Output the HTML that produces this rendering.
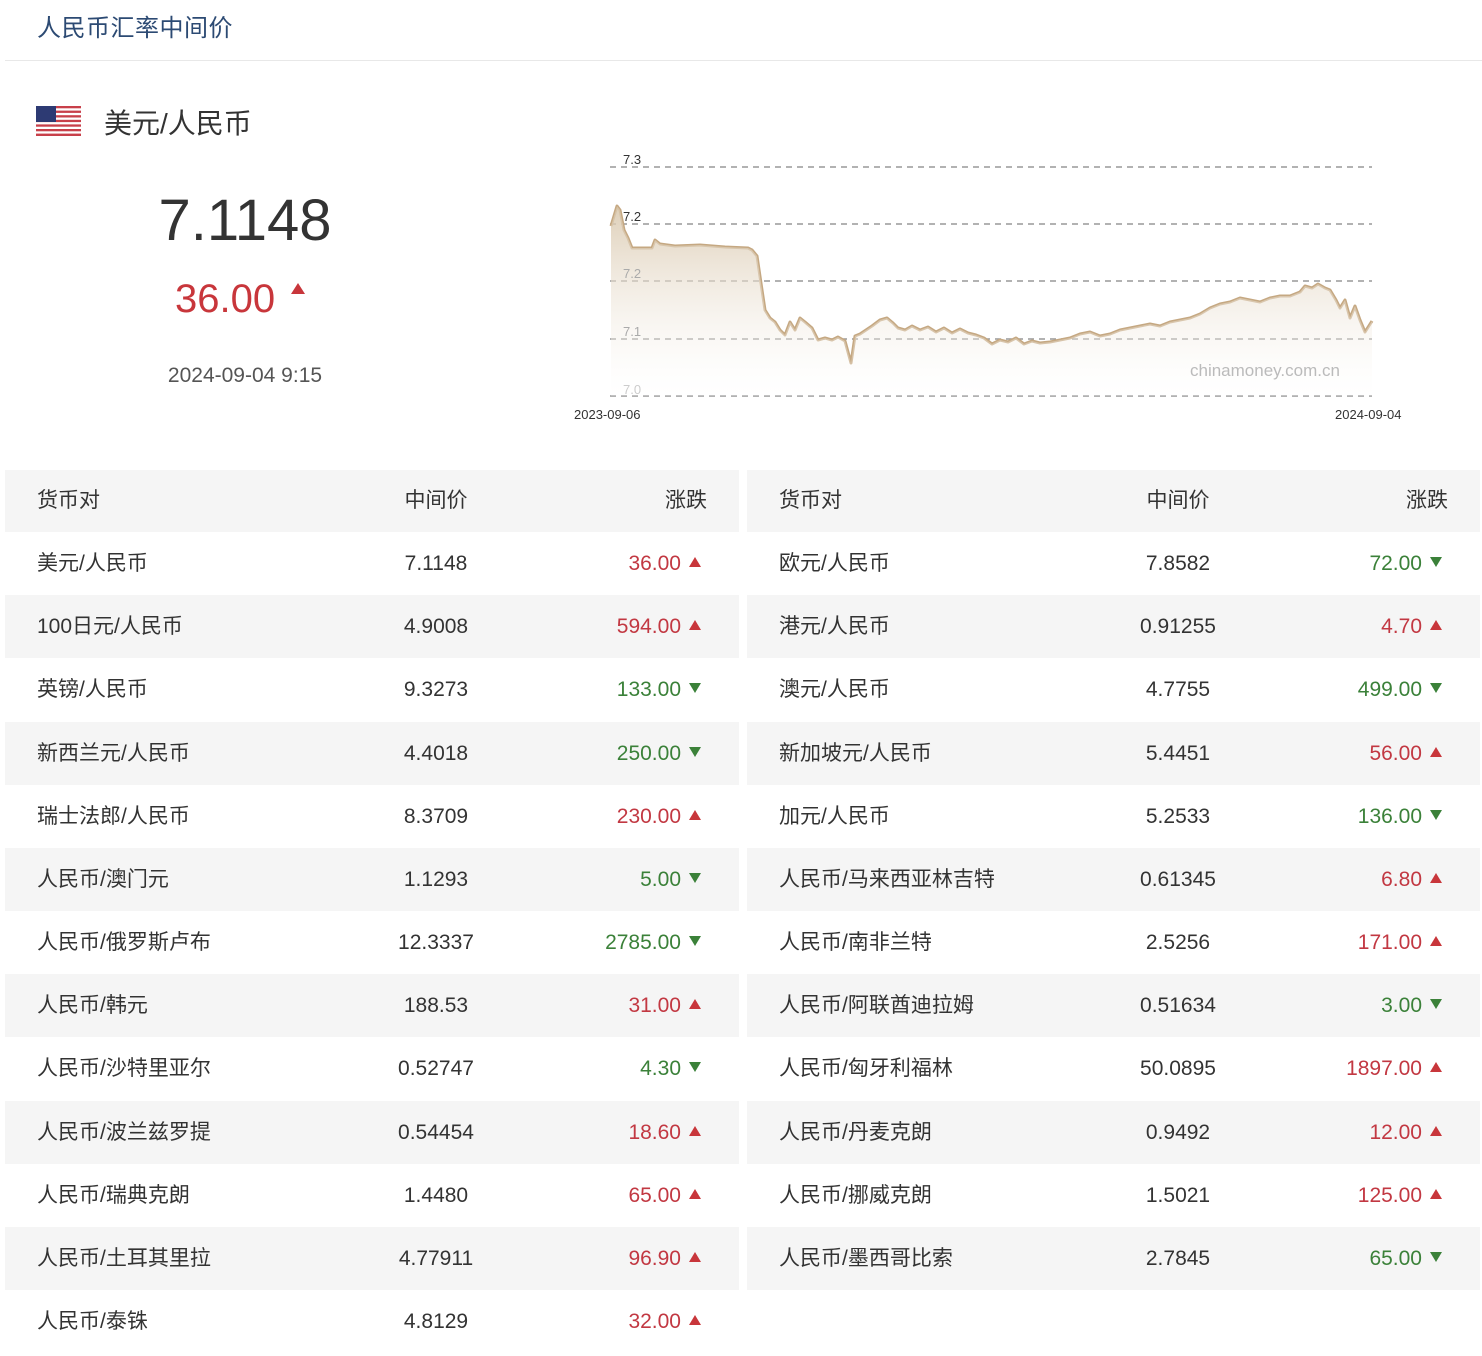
<!DOCTYPE html>
<html><head><meta charset="utf-8">
<style>
*{margin:0;padding:0;box-sizing:border-box}
body{width:1482px;height:1356px;background:#fff;position:relative;overflow:hidden;font-family:"Liberation Sans","Noto Sans CJK SC",sans-serif;color:#333}
.a{position:absolute}
.t{position:absolute;height:63px;line-height:63px;font-size:21px;color:#333}
.g{background:#f5f5f5}
.L{left:5px;width:734px}.R{left:747px;width:733px}
.t span{position:absolute;top:0}
.n{left:32px}
.m{width:200px;text-align:center;left:331px}
.c{right:38px;text-align:right}
.up{color:#c23842}.dn{color:#3b8139}
.t span.tri{position:relative;display:inline-block;font-size:0;width:0;height:0;margin-left:8px;vertical-align:middle;top:-2px}
.up .tri{border-left:6px solid transparent;border-right:6px solid transparent;border-bottom:10px solid #c8363b}
.dn .tri{border-left:6px solid transparent;border-right:6px solid transparent;border-top:10px solid #3b8139}
</style></head><body>
<div class="a" style="left:37px;top:8px;font-size:24px;color:#2c4a73;letter-spacing:0.5px">人民币汇率中间价</div>
<div class="a" style="left:5px;top:60px;width:1477px;height:1px;background:#e8e8e8"></div>
<svg class="a" style="left:36px;top:106px" width="45" height="30" viewBox="0 0 45 30">
<rect width="45" height="30" fill="#fff"/>
<g fill="#c8404a"><rect y="0" width="45" height="2.3"/><rect y="4.6" width="45" height="2.3"/><rect y="9.2" width="45" height="2.3"/><rect y="13.8" width="45" height="2.3"/><rect y="18.4" width="45" height="2.3"/><rect y="23" width="45" height="2.3"/><rect y="27.6" width="45" height="2.4"/></g>
<rect width="20" height="16" fill="#2d3a73"/></svg>
<div class="a" style="left:104px;top:102px;font-size:28px;color:#333">美元/人民币</div>
<div class="a" style="left:0;width:490px;text-align:center;top:187px;font-size:58px;color:#333">7.1148</div>
<div class="a" style="left:175px;top:277px;font-size:40px;color:#c8363b">36.00<span style="display:inline-block;width:0;height:0;border-left:7px solid transparent;border-right:7px solid transparent;border-bottom:11px solid #c8363b;margin-left:16px;position:relative;top:-18px"></span></div>
<div class="a" style="left:0;width:490px;text-align:center;top:364px;font-size:21px;color:#555">2024-09-04 9:15</div>

<svg class="a" style="left:560px;top:140px" width="880" height="300" viewBox="560 140 880 300">
<defs><linearGradient id="gr" x1="0" y1="0" x2="0" y2="1"><stop offset="0" stop-color="#d8c6ab" stop-opacity="0.85"/><stop offset="1" stop-color="#fff" stop-opacity="0.2"/></linearGradient></defs>
<g stroke="#999" stroke-dasharray="6,5" stroke-width="1.5"><line x1="610" y1="167" x2="1372" y2="167"/><line x1="610" y1="224" x2="1372" y2="224"/><line x1="610" y1="281" x2="1372" y2="281"/><line x1="610" y1="339" x2="1372" y2="339"/><line x1="610" y1="396" x2="1372" y2="396"/></g>
<path id="ln" d="M611,226 L617,206 L620,210 L624,230 L628,238 L632,248 L652,248 L655,240 L660,244 L675,246 L700,245 L725,247 L748,248 L752,250 L757,256 L762,290 L765,310 L770,318 L775,322 L780,330 L785,335 L790,322 L795,330 L800,318 L805,322 L812,328 L818,340 L825,338 L832,340 L838,337 L845,341 L851,363 L855,336 L860,334 L866,330 L872,326 L880,320 L887,318 L893,323 L898,328 L905,330 L912,326 L920,330 L928,327 L936,332 L944,328 L952,333 L960,329 L968,333 L976,335 L984,338 L992,344 L1000,340 L1008,342 L1016,338 L1024,344 L1032,341 L1040,343 L1050,342 L1060,340 L1070,338 L1080,334 L1090,332 L1100,336 L1110,334 L1120,330 L1130,328 L1140,326 L1150,324 L1160,326 L1170,322 L1180,320 L1190,318 L1200,314 L1210,308 L1220,304 L1230,302 L1240,298 L1250,300 L1260,302 L1270,298 L1280,296 L1290,296 L1300,292 L1305,286 L1312,288 L1318,284 L1325,288 L1330,290 L1336,300 L1340,308 L1345,300 L1350,318 L1355,306 L1360,320 L1365,332 L1372,321" fill="none" stroke="#c5a882" stroke-width="3" stroke-linejoin="round"/>
<path d="M611,226 L617,206 L620,210 L624,230 L628,238 L632,248 L652,248 L655,240 L660,244 L675,246 L700,245 L725,247 L748,248 L752,250 L757,256 L762,290 L765,310 L770,318 L775,322 L780,330 L785,335 L790,322 L795,330 L800,318 L805,322 L812,328 L818,340 L825,338 L832,340 L838,337 L845,341 L851,363 L855,336 L860,334 L866,330 L872,326 L880,320 L887,318 L893,323 L898,328 L905,330 L912,326 L920,330 L928,327 L936,332 L944,328 L952,333 L960,329 L968,333 L976,335 L984,338 L992,344 L1000,340 L1008,342 L1016,338 L1024,344 L1032,341 L1040,343 L1050,342 L1060,340 L1070,338 L1080,334 L1090,332 L1100,336 L1110,334 L1120,330 L1130,328 L1140,326 L1150,324 L1160,326 L1170,322 L1180,320 L1190,318 L1200,314 L1210,308 L1220,304 L1230,302 L1240,298 L1250,300 L1260,302 L1270,298 L1280,296 L1290,296 L1300,292 L1305,286 L1312,288 L1318,284 L1325,288 L1330,290 L1336,300 L1340,308 L1345,300 L1350,318 L1355,306 L1360,320 L1365,332 L1372,321 L1372,396 L611,396 Z" fill="url(#gr)"/>
<g font-family="Liberation Sans,sans-serif" font-size="13"><text x="623" y="164" fill="#333">7.3</text><text x="623" y="221" fill="#333">7.2</text><text x="623" y="278" fill="#aaa">7.2</text><text x="623" y="336" fill="#aaa">7.1</text><text x="623" y="394" fill="#ccc">7.0</text>
<text x="574" y="419" fill="#333">2023-09-06</text><text x="1335" y="419" fill="#333">2024-09-04</text>
<text x="1190" y="376" fill="#bbb" font-size="17">chinamoney.com.cn</text></g>
</svg>

<div class="t L g" style="top:470px;height:62px;line-height:62px"><span class="n">货币对</span><span class="m">中间价</span><span class="c" style="right:32px">涨跌</span></div>
<div class="t R g" style="top:470px;height:62px;line-height:62px"><span class="n">货币对</span><span class="m">中间价</span><span class="c" style="right:32px">涨跌</span></div>

<div class="t L" style="top:532px"><span class="n">美元/人民币</span><span class="m">7.1148</span><span class="c up">36.00<span class="tri"></span></span></div>
<div class="t L g" style="top:595px"><span class="n">100日元/人民币</span><span class="m">4.9008</span><span class="c up">594.00<span class="tri"></span></span></div>
<div class="t L" style="top:658px"><span class="n">英镑/人民币</span><span class="m">9.3273</span><span class="c dn">133.00<span class="tri"></span></span></div>
<div class="t L g" style="top:722px"><span class="n">新西兰元/人民币</span><span class="m">4.4018</span><span class="c dn">250.00<span class="tri"></span></span></div>
<div class="t L" style="top:785px"><span class="n">瑞士法郎/人民币</span><span class="m">8.3709</span><span class="c up">230.00<span class="tri"></span></span></div>
<div class="t L g" style="top:848px"><span class="n">人民币/澳门元</span><span class="m">1.1293</span><span class="c dn">5.00<span class="tri"></span></span></div>
<div class="t L" style="top:911px"><span class="n">人民币/俄罗斯卢布</span><span class="m">12.3337</span><span class="c dn">2785.00<span class="tri"></span></span></div>
<div class="t L g" style="top:974px"><span class="n">人民币/韩元</span><span class="m">188.53</span><span class="c up">31.00<span class="tri"></span></span></div>
<div class="t L" style="top:1037px"><span class="n">人民币/沙特里亚尔</span><span class="m">0.52747</span><span class="c dn">4.30<span class="tri"></span></span></div>
<div class="t L g" style="top:1101px"><span class="n">人民币/波兰兹罗提</span><span class="m">0.54454</span><span class="c up">18.60<span class="tri"></span></span></div>
<div class="t L" style="top:1164px"><span class="n">人民币/瑞典克朗</span><span class="m">1.4480</span><span class="c up">65.00<span class="tri"></span></span></div>
<div class="t L g" style="top:1227px"><span class="n">人民币/土耳其里拉</span><span class="m">4.77911</span><span class="c up">96.90<span class="tri"></span></span></div>
<div class="t L" style="top:1290px"><span class="n">人民币/泰铢</span><span class="m">4.8129</span><span class="c up">32.00<span class="tri"></span></span></div>

<div class="t R" style="top:532px"><span class="n">欧元/人民币</span><span class="m">7.8582</span><span class="c dn">72.00<span class="tri"></span></span></div>
<div class="t R g" style="top:595px"><span class="n">港元/人民币</span><span class="m">0.91255</span><span class="c up">4.70<span class="tri"></span></span></div>
<div class="t R" style="top:658px"><span class="n">澳元/人民币</span><span class="m">4.7755</span><span class="c dn">499.00<span class="tri"></span></span></div>
<div class="t R g" style="top:722px"><span class="n">新加坡元/人民币</span><span class="m">5.4451</span><span class="c up">56.00<span class="tri"></span></span></div>
<div class="t R" style="top:785px"><span class="n">加元/人民币</span><span class="m">5.2533</span><span class="c dn">136.00<span class="tri"></span></span></div>
<div class="t R g" style="top:848px"><span class="n">人民币/马来西亚林吉特</span><span class="m">0.61345</span><span class="c up">6.80<span class="tri"></span></span></div>
<div class="t R" style="top:911px"><span class="n">人民币/南非兰特</span><span class="m">2.5256</span><span class="c up">171.00<span class="tri"></span></span></div>
<div class="t R g" style="top:974px"><span class="n">人民币/阿联酋迪拉姆</span><span class="m">0.51634</span><span class="c dn">3.00<span class="tri"></span></span></div>
<div class="t R" style="top:1037px"><span class="n">人民币/匈牙利福林</span><span class="m">50.0895</span><span class="c up">1897.00<span class="tri"></span></span></div>
<div class="t R g" style="top:1101px"><span class="n">人民币/丹麦克朗</span><span class="m">0.9492</span><span class="c up">12.00<span class="tri"></span></span></div>
<div class="t R" style="top:1164px"><span class="n">人民币/挪威克朗</span><span class="m">1.5021</span><span class="c up">125.00<span class="tri"></span></span></div>
<div class="t R g" style="top:1227px"><span class="n">人民币/墨西哥比索</span><span class="m">2.7845</span><span class="c dn">65.00<span class="tri"></span></span></div>
</body></html>
